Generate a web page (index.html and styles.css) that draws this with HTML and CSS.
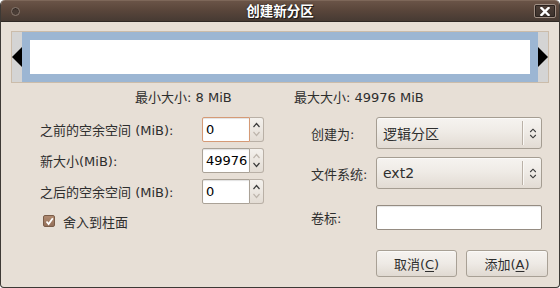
FILE: index.html
```html
<!DOCTYPE html>
<html lang="zh">
<head>
<meta charset="utf-8">
<title>创建新分区</title>
<link rel="stylesheet" href="styles.css">
</head>
<body>
<div class="window">
  <div class="titlebar">
    <div class="tb-left"><span class="menu-dot"></span></div>
    <div class="title">创建新分区</div>
    <div class="tb-right">
      <span class="close">
        <svg width="10" height="9" viewBox="0 0 10 9"><path d="M1.5 1 L8.5 8 M8.5 1 L1.5 8" stroke="#fff" stroke-width="2.4" stroke-linecap="square"/></svg>
      </span>
    </div>
  </div>
  <div class="content">
    <div class="slider">
      <div class="handle">
        <svg width="10" height="20" viewBox="0 0 10 20"><polygon points="10,0 0,10 10,20" fill="#000"/></svg>
      </div>
      <div class="part"><div class="part-inner"></div></div>
      <div class="handle">
        <svg width="10" height="20" viewBox="0 0 10 20"><polygon points="0,0 10,10 0,20" fill="#000"/></svg>
      </div>
    </div>

    <div class="sizes">
      <span class="size-min">最小大小: 8 MiB</span>
      <span class="size-max">最大大小: 49976 MiB</span>
    </div>

    <div class="main">
      <div class="left">
        <div class="field">
          <span class="label">之前的空余空间 (MiB):</span>
          <div class="spin">
            <div class="entry focused">0</div>
            <div class="spin-btns">
              <svg class="chev" width="9" height="6" viewBox="0 0 9 6"><polyline points="1.5,5 4.5,1.5 7.5,5" fill="none" stroke="#3a3a3a" stroke-width="1.2"/></svg>
              <svg class="chev" width="9" height="6" viewBox="0 0 9 6"><polyline points="1.5,1 4.5,4.5 7.5,1" fill="none" stroke="#bdb5ac" stroke-width="1.2"/></svg>
            </div>
          </div>
        </div>
        <div class="field">
          <span class="label">新大小(MiB):</span>
          <div class="spin">
            <div class="entry">49976</div>
            <div class="spin-btns">
              <svg class="chev" width="9" height="6" viewBox="0 0 9 6"><polyline points="1.5,5 4.5,1.5 7.5,5" fill="none" stroke="#bdb5ac" stroke-width="1.2"/></svg>
              <svg class="chev" width="9" height="6" viewBox="0 0 9 6"><polyline points="1.5,1 4.5,4.5 7.5,1" fill="none" stroke="#3a3a3a" stroke-width="1.2"/></svg>
            </div>
          </div>
        </div>
        <div class="field">
          <span class="label">之后的空余空间 (MiB):</span>
          <div class="spin">
            <div class="entry">0</div>
            <div class="spin-btns">
              <svg class="chev" width="9" height="6" viewBox="0 0 9 6"><polyline points="1.5,5 4.5,1.5 7.5,5" fill="none" stroke="#3a3a3a" stroke-width="1.2"/></svg>
              <svg class="chev" width="9" height="6" viewBox="0 0 9 6"><polyline points="1.5,1 4.5,4.5 7.5,1" fill="none" stroke="#bdb5ac" stroke-width="1.2"/></svg>
            </div>
          </div>
        </div>
        <div class="check-row">
          <span class="checkbox">
            <svg width="9" height="9" viewBox="0 0 9 9"><polyline points="1.5,4.5 3.6,7 7.8,1.2" fill="none" stroke="#fff" stroke-width="1.8"/></svg>
          </span>
          <span class="check-label">舍入到柱面</span>
        </div>
      </div>

      <div class="right">
        <div class="rfield combo-row">
          <span class="rlabel">创建为:</span>
          <div class="combo">
            <span class="combo-text">逻辑分区</span>
            <span class="combo-sep"></span>
            <span class="combo-arrow">
              <svg width="8" height="11" viewBox="0 0 8 11"><polyline points="1.2,4 4,1.2 6.8,4" fill="none" stroke="#3a3a3a" stroke-width="1.1"/><polyline points="1.2,7 4,9.8 6.8,7" fill="none" stroke="#3a3a3a" stroke-width="1.1"/></svg>
            </span>
          </div>
        </div>
        <div class="rfield combo-row second">
          <span class="rlabel">文件系统:</span>
          <div class="combo">
            <span class="combo-text">ext2</span>
            <span class="combo-sep"></span>
            <span class="combo-arrow">
              <svg width="8" height="11" viewBox="0 0 8 11"><polyline points="1.2,4 4,1.2 6.8,4" fill="none" stroke="#3a3a3a" stroke-width="1.1"/><polyline points="1.2,7 4,9.8 6.8,7" fill="none" stroke="#3a3a3a" stroke-width="1.1"/></svg>
            </span>
          </div>
        </div>
        <div class="rfield entry-row">
          <span class="rlabel">卷标:</span>
          <div class="text-entry"></div>
        </div>
      </div>
    </div>

    <div class="buttons">
      <button class="btn btn-cancel">取消(<u>C</u>)</button>
      <button class="btn btn-add">添加(<u>A</u>)</button>
    </div>
  </div>
</div>
</body>
</html>
```

FILE: styles.css
```css
* { box-sizing: border-box; }

html, body {
  margin: 0;
  padding: 0;
  background: #ffffff;
}

body {
  width: 560px;
  height: 288px;
  font-family: "DejaVu Sans", "Noto Sans CJK SC", sans-serif;
  font-size: 13px;
  color: #2e2e2e;
}

.window {
  width: 560px;
  height: 288px;
  display: flex;
  flex-direction: column;
  background: #e7dfd6;
  border-radius: 5px 5px 4px 4px;
  border: 1px solid #3d3935;
  border-top: none;
  overflow: hidden;
}

/* title bar */
.titlebar {
  height: 22px;
  flex: none;
  display: grid;
  grid-template-columns: 1fr auto 1fr;
  align-items: center;
  background: linear-gradient(#6a5447 0%, #5a463b 45%, #463a33 100%);
  border-top: 1px solid #7d6759;
  border-bottom: 1px solid #2f2925;
  margin: 0 -1px;
  border-radius: 5px 5px 0 0;
}

.tb-left {
  display: flex;
  align-items: center;
  padding-left: 11px;
}

.menu-dot {
  width: 9px;
  height: 9px;
  border-radius: 50%;
  border: 1px solid #8a7a70;
  background: #4a3d36;
  box-shadow: inset 0 1px 1px #2c241f;
}

.title {
  color: #ffffff;
  font-weight: bold;
  font-size: 13.5px;
  text-shadow: 1px 1px 0 #1f1a17, 0 0 2px #1f1a17;
  line-height: 20px;
}

.tb-right {
  display: flex;
  justify-content: flex-end;
  padding-right: 4px;
}

.close {
  width: 22px;
  height: 14px;
  display: flex;
  align-items: center;
  justify-content: center;
  border: 1px solid #a08f84;
  border-radius: 2px;
  background: linear-gradient(#4e3f37, #3b312c);
  box-shadow: inset 0 0 0 1px #2a221e;
}

/* content */
.content {
  flex: 1;
  display: flex;
  flex-direction: column;
  padding: 9px 10px 0 10px;
}

.slider {
  width: 538px;
  height: 52px;
  display: flex;
  align-items: center;
  border: 1px solid #cbbcaa;
  background: #d4d4d4;
}

.handle {
  width: 10px;
  display: flex;
  align-items: center;
  justify-content: center;
}

.part {
  width: 516px;
  height: 50px;
  background: #9cb6d3;
  padding: 8px;
}

.part-inner {
  width: 100%;
  height: 100%;
  background: #ffffff;
}

.sizes {
  display: flex;
  margin-top: 7px;
  padding-left: 124px;
  line-height: 16px;
}

.size-min {
  width: 159px;
}

.main {
  display: flex;
  margin-top: 11px;
  padding-left: 29px;
  gap: 47px;
  height: 115px;
}

.left {
  display: flex;
  flex-direction: column;
  gap: 6px;
}

.field {
  display: flex;
  align-items: center;
  height: 25px;
}

.label {
  width: 162px;
}

.spin {
  display: flex;
  height: 25px;
}

.entry {
  width: 48px;
  height: 25px;
  background: #ffffff;
  border: 1px solid #aaa297;
  border-radius: 2px 0 0 2px;
  box-shadow: inset 0 1px 1px rgba(0,0,0,0.12);
  padding-left: 3px;
  line-height: 23px;
  font-size: 13px;
  color: #000;
  white-space: nowrap;
  overflow: hidden;
}

.entry.focused {
  border-color: #d59a76;
}

.spin-btns {
  width: 14px;
  height: 25px;
  display: flex;
  flex-direction: column;
  align-items: center;
  justify-content: space-around;
  padding: 2px 0;
  border: 1px solid #b9b0a6;
  border-left: none;
  border-radius: 0 3px 3px 0;
  background: linear-gradient(#f4f1ed, #e3dcd4);
}

.chev {
  display: block;
}

.check-row {
  display: flex;
  align-items: center;
  height: 22px;
  padding-left: 3px;
  gap: 8px;
}

.checkbox {
  width: 12px;
  height: 12px;
  display: flex;
  align-items: center;
  justify-content: center;
  background: linear-gradient(#b08a70, #94705a);
  border: 1px solid #7a5c48;
  border-radius: 2px;
}

.right {
  display: flex;
  flex-direction: column;
}

.rfield {
  display: flex;
  align-items: center;
}

.rfield.second {
  margin-top: 8px;
}

.rfield.entry-row {
  margin-top: 16px;
}

.rlabel {
  width: 65px;
}

.combo {
  width: 166px;
  height: 32px;
  display: flex;
  align-items: center;
  border: 1px solid #a59d92;
  border-radius: 3px;
  background: linear-gradient(#f6f3f0 0%, #efebe6 45%, #e2dbd3 100%);
  box-shadow: inset 0 1px 0 #fbfaf8;
}

.combo-text {
  flex: 1;
  padding-left: 6px;
  font-size: 14px;
}

.combo-sep {
  width: 2px;
  height: 24px;
  border-left: 1px solid #bab1a7;
  border-right: 1px solid #faf8f5;
}

.combo-arrow {
  width: 17px;
  display: flex;
  justify-content: center;
}

.text-entry {
  width: 166px;
  height: 25px;
  background: #ffffff;
  border: 1px solid #958c82;
  border-radius: 2px;
  box-shadow: inset 0 1px 1px rgba(0,0,0,0.1);
}

.buttons {
  display: flex;
  justify-content: flex-end;
  gap: 9px;
  margin-top: 18px;
  padding-right: 1px;
}

.btn {
  height: 27px;
  font-family: "DejaVu Sans", "Noto Sans CJK SC", sans-serif;
  font-size: 13px;
  color: #2e2e2e;
  border: 1px solid #a8a095;
  border-radius: 3px;
  background: linear-gradient(#f6f3f0 0%, #eeeae5 50%, #e0d9d1 100%);
  box-shadow: inset 0 1px 0 #fbfaf8;
  padding: 0;
}

.btn-cancel { width: 81px; }
.btn-add { width: 82px; }

.btn u {
  text-underline-offset: 2px;
}
```
